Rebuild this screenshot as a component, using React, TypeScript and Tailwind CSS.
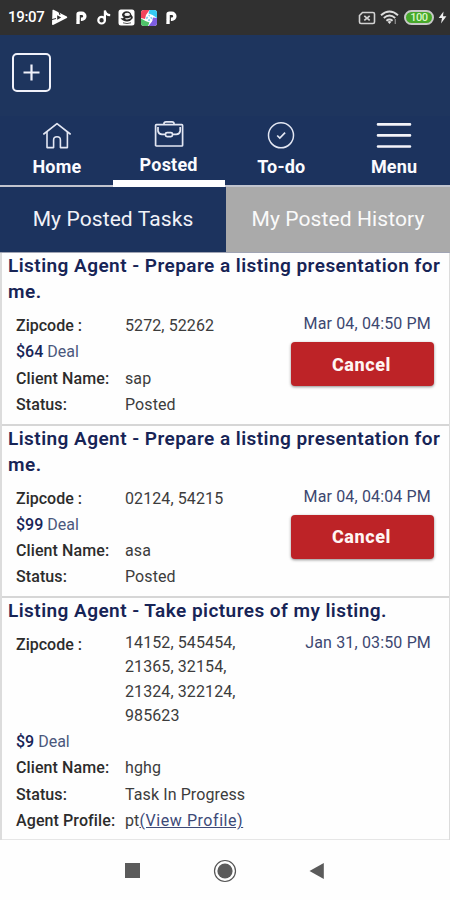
import React from "react";

function PlayGlyph() {
  return (
    <svg width="17" height="17" viewBox="0 0 17 17" className="shrink-0">
      <path d="M1.5 1 Q1.8 .4 2.6 .8 L15.8 7.6 Q16.8 8.3 15.8 9 L2.6 15.8 Q1 16.2 1 15 Z" fill="#fff" />
      <path d="M6.2 6.2 L10.2 8.4 L6.2 10.8 Z" fill="#303030" />
      <path d="M0 10.8 L5 9.5 M8 3.2 L9 6" stroke="#303030" strokeWidth="1" />
    </svg>
  );
}

function PGlyph() {
  return (
    <svg width="13" height="14" viewBox="0 0 12 14" className="shrink-0">
      <path d="M2.6 8.4 V3.2 Q2.6 2.2 4 2.2 H6.3 A3 3 0 0 1 6.3 8.3 H5.4" fill="none" stroke="#fff" strokeWidth="3.4" />
      <path d="M1 8 H4.2 V13 H.8 Z" fill="#fff" />
    </svg>
  );
}

function NoteGlyph() {
  return (
    <svg width="14" height="15" viewBox="0 0 14 15" className="shrink-0">
      <circle cx="4.6" cy="10.2" r="3.3" fill="none" stroke="#fff" strokeWidth="2.2" />
      <path d="M7.9 10.5 V.5 C8.4 3.5 10 5 13.2 5.2" fill="none" stroke="#fff" strokeWidth="2.2" />
    </svg>
  );
}

function FaceGlyph() {
  return (
    <svg width="17" height="17" viewBox="0 0 17 17" className="shrink-0">
      <rect x=".5" y=".5" width="16" height="16" rx="2.5" fill="#fff" />
      <path d="M4 5.5 Q5 2.5 8.5 2.3 Q12.8 2.5 13.2 5.5 Q15.2 7.5 14.5 9.5 Q12.5 12.6 9 12.5 Q4.5 12.3 2.5 9 Q6 10 5.5 8 Q4 7.5 4 5.5 Z" fill="#2a2a2a" />
      <ellipse cx="9.2" cy="5.4" rx="2.8" ry="1.6" fill="#f2f2f2" />
      <path d="M7.5 9.4 Q10 10.6 12.8 8.6" stroke="#eee" strokeWidth="1.1" fill="none" />
      <path d="M5 13.8 Q9 15.3 13 13.8" stroke="#444" strokeWidth=".9" fill="none" />
    </svg>
  );
}

function ColorGlyph() {
  return (
    <svg width="16" height="16" viewBox="0 0 16 16" className="shrink-0">
      <clipPath id="tile"><rect width="16" height="16" rx="3" /></clipPath>
      <g clipPath="url(#tile)">
        <rect width="16" height="16" fill="#fff" />
        <path d="M0 0 H8.5 L5 5 L4 9 L0 8 Z" fill="#f2435c" />
        <path d="M8.5 0 H16 V8 L11.5 5 L7.5 3.5 Z" fill="#35c9f1" />
        <path d="M0 8.5 L4.5 11 L8.5 12.5 L7 16 H0 Z" fill="#4fc46a" />
        <path d="M16 8 V16 H7.5 L11 11.5 L12 7.5 Z" fill="#7d5de0" />
        <path d="M8 4.5 L11.5 8 L8 11.5 L4.5 8 Z" fill="#7fcdf0" />
        <path d="M6 5 L11 11 M10.5 5.5 L5.5 10.5" stroke="#fff" strokeWidth="1.2" />
      </g>
    </svg>
  );
}

function StatusBar() {
  return (
    <div className="flex h-[35px] items-center bg-[#303030] pl-[8px] pr-[3px] text-white">
      <span className="w-[43px] whitespace-nowrap text-[15px] font-medium leading-none tracking-[-0.3px]">19:07</span>
      <PlayGlyph />
      <span className="ml-[7px] flex"><PGlyph /></span>
      <span className="ml-[9px] flex"><NoteGlyph /></span>
      <span className="ml-[7px] flex"><FaceGlyph /></span>
      <span className="ml-[6px] flex"><ColorGlyph /></span>
      <span className="ml-[8px] flex"><PGlyph /></span>
      <div className="ml-auto flex items-center">
        <svg width="18" height="14" viewBox="0 0 18 14">
          <path d="M4.5 1.5 H15 Q16.5 1.5 16.5 3 V11 Q16.5 12.5 15 12.5 H3 Q1.5 12.5 1.5 11 V4.5 Z" fill="none" stroke="#d2d2d2" strokeWidth="1.6" />
          <path d="M6.3 4.8 L11.7 9.4 M11.7 4.8 L6.3 9.4" stroke="#d2d2d2" strokeWidth="1.7" />
        </svg>
        <svg width="19" height="15" viewBox="0 0 19 15" className="ml-[4px]">
          <path d="M1 5.2 Q9.5 -2.2 18 5.2 M3.8 8 Q9.5 3.2 15.2 8 M6.4 10.7 Q9.5 8.3 12.6 10.7" fill="none" stroke="#ddd" strokeWidth="1.9" />
          <path d="M7.5 11.8 Q9.5 10.4 11.5 11.8 L9.5 14 Z" fill="#ddd" />
          <path d="M15.3 9 V14" stroke="#888" strokeWidth="1.3" />
        </svg>
        <div className="ml-[5px] flex h-[15px] w-[30px] items-center justify-center rounded-full border-2 border-[#c8c8c8] bg-[#46a82b] text-[11px] font-medium leading-none tracking-[-0.5px] text-[#d9f7c6]">
          100
        </div>
        <svg width="9" height="13" viewBox="0 0 9 13" className="ml-[4px]">
          <path d="M5.5 .5 L.7 7 H4 L3 12.5 L8.4 5.2 H5 Z" fill="#eee" />
        </svg>
      </div>
    </div>
  );
}

function HomeIcon() {
  return (
    <svg width="30" height="28" viewBox="0 0 30 28" fill="none" stroke="#e3e7f3" strokeWidth="1.6" strokeLinejoin="round" strokeLinecap="round">
      <path d="M1.8 12 L15 1.6 L28.2 12" />
      <path d="M5 10.2 V25.6 H11.6 V18 Q11.6 14.8 15 14.8 Q18.4 14.8 18.4 18 V25.6 H25.4 V10.2" />
    </svg>
  );
}

function BriefcaseIcon() {
  return (
    <svg width="30" height="28" viewBox="0 0 30 28" fill="none" stroke="#e3e7f3" strokeWidth="1.7" strokeLinejoin="round">
      <rect x="1.6" y="4.6" width="27" height="21.4" rx=".8" />
      <path d="M10 4.6 V3.6 Q10 1.8 12 1.8 H18 Q20 1.8 20 3.6 V4.6" />
      <path d="M4 7 V11 Q4.6 14.2 8 14.4 H11.5 M26.2 7 V11 Q25.6 14.2 22.2 14.4 H18.5" />
      <rect x="11.5" y="12.6" width="7" height="4" rx="1.6" />
    </svg>
  );
}

function TodoIcon() {
  return (
    <svg width="28" height="28" viewBox="0 0 28 28" fill="none" stroke="#e3e7f3">
      <circle cx="14" cy="13.3" r="12.5" strokeWidth="1.5" />
      <path d="M10.2 13.5 L12.8 16.1 L18.1 10.7" strokeWidth="1.7" />
    </svg>
  );
}

function MenuIcon() {
  return (
    <svg width="36" height="28" viewBox="0 0 36 28" stroke="#f3f4fa" strokeWidth="2.6" strokeLinecap="round">
      <path d="M2 2.4 H34 M2 13.4 H34 M2 24.5 H34" />
    </svg>
  );
}

function NavItem({ icon, label, active = false }: { icon: React.ReactNode; label: string; active?: boolean }) {
  return (
    <div className={active ? "flex flex-1 flex-col items-center border-b-[7px] border-white pt-[4px]" : "flex flex-1 flex-col items-center border-b-2 border-[#c1c4ce] pl-px pt-[6px]"}>
      <div className="flex h-[28px]">{icon}</div>
      <span className="mt-[6px] text-[18px] font-bold leading-[22px] tracking-[0.2px] text-[#fbfbff]">{label}</span>
    </div>
  );
}

interface Task {
  title: string;
  zip: string;
  price: string;
  client: string;
  status: string;
  date: string;
  agent?: string;
  cancel?: boolean;
}

const tasks: Task[] = [
  { title: "Listing Agent - Prepare a listing presentation for me.", zip: "5272, 52262", price: "$64", client: "sap", status: "Posted", date: "Mar 04, 04:50 PM", cancel: true },
  { title: "Listing Agent - Prepare a listing presentation for me.", zip: "02124, 54215", price: "$99", client: "asa", status: "Posted", date: "Mar 04, 04:04 PM", cancel: true },
  { title: "Listing Agent - Take pictures of my listing.", zip: "14152, 545454, 21365, 32154, 21324, 322124, 985623", price: "$9", client: "hghg", status: "Task In Progress", date: "Jan 31, 03:50 PM", agent: "pt" },
];

function Row({ label, children }: { label: string; children: React.ReactNode }) {
  return (
    <div className="flex leading-[26.3px]">
      <span className="w-[109px] shrink-0 whitespace-nowrap font-medium tracking-[0.1px] text-[#2c2c2c]">{label}</span>
      <span className="whitespace-nowrap tracking-[0.1px] text-[#3c3c3c]">{children}</span>
    </div>
  );
}

function TaskCard({ task }: { task: Task }) {
  return (
    <article className={task.cancel ? "h-[172.5px] border-b-2 border-[#d6d6d6]" : "h-[242px] border-b border-[#e6e6e6]"}>
      <h2 className="pl-[6px] text-[19px] font-semibold leading-[26px] tracking-[0.45px] text-[#172456]">{task.title}</h2>
      <div className="mt-[8px] flex justify-between pl-[14px] pr-[15px] text-[16px]">
        <div>
          <div className="flex">
            <span className="w-[109px] font-medium leading-[26.3px] text-[#2c2c2c]">Zipcode :</span>
            <span className={task.cancel ? "leading-[26.3px] tracking-[0.1px] text-[#3c3c3c]" : "-mt-px w-[125px] pb-[1px] leading-[24.3px] tracking-[0.1px] text-[#3c3c3c]"}>{task.zip}</span>
          </div>
          <div className="leading-[26.3px] text-[#4b587c]">
            <span className="font-medium text-[#172456]">{task.price}</span> Deal
          </div>
          <Row label="Client Name:">{task.client}</Row>
          <Row label="Status:">{task.status}</Row>
          {task.agent && (
            <Row label="Agent Profile:">
              {task.agent}
              <span className="tracking-[0.55px] text-[#3d4a78] underline">(View Profile)</span>
            </Row>
          )}
        </div>
        <div className="-mt-[2px] flex flex-col items-end">
          <span className="mr-[3px] whitespace-nowrap leading-[26px] tracking-[0.15px] text-[#3c4770]">{task.date}</span>
          {task.cancel && (
            <button className="mt-[5px] h-[44px] w-[143px] rounded-[4px] bg-[#bd2327] pr-[2px] text-[18px] font-extrabold tracking-[0.6px] text-[#fff5f3] shadow-[0_1px_3px_rgba(0,0,0,0.45)]">Cancel</button>
          )}
        </div>
      </div>
    </article>
  );
}

export default function App() {
  return (
    <div className="h-[900px] w-[450px] overflow-hidden bg-[#fefefe] font-['Roboto','Liberation_Sans',sans-serif]">
      <StatusBar />
      <header className="h-[81px] bg-[#1e355e] pl-[12px] pt-[18px]">
        <div className="flex h-[39px] w-[39px] items-center justify-center rounded-[5px] border-2 border-[#f0f1fa]">
          <svg width="17" height="17" viewBox="0 0 17 17" stroke="#f0f1fa" strokeWidth="2.2">
            <path d="M8.5 .5 V16.5 M.5 8.5 H16.5" />
          </svg>
        </div>
      </header>
      <nav className="flex h-[71px] bg-[#1c335e]">
        <NavItem icon={<HomeIcon />} label="Home" />
        <NavItem icon={<BriefcaseIcon />} label="Posted" active />
        <NavItem icon={<TodoIcon />} label="To-do" />
        <NavItem icon={<MenuIcon />} label="Menu" />
      </nav>
      <div className="flex h-[66px] border-b border-b-[#a0a4b4] text-[21px] tracking-[0.1px]">
        <div className="flex w-[226px] items-center justify-center bg-[#1c335e] pt-px text-[#f1f2f8]">My Posted Tasks</div>
        <div className="flex flex-1 items-center justify-center bg-[#aaaaaa] pt-px text-[#fafafa]">My Posted History</div>
      </div>
      <main className="h-[587px] border-l-2 border-r border-[#dcdcdc]">
        {tasks.map((task) => (
          <TaskCard key={task.date} task={task} />
        ))}
      </main>
      <footer className="flex h-[60px] items-center pl-[125px] pt-px">
        <div className="h-[15px] w-[15px] bg-[#5b5b5b]" />
        <svg width="24" height="24" viewBox="0 0 24 24" className="ml-[73px]">
          <circle cx="12" cy="12" r="10.5" fill="none" stroke="#555" strokeWidth="1.2" />
          <circle cx="12" cy="12" r="7.6" fill="#5b5b5b" />
        </svg>
        <svg width="16" height="18" viewBox="0 0 16 18" className="ml-[72px]">
          <path d="M.5 9 L14.8 1 V17 Z" fill="#5b5b5b" />
        </svg>
      </footer>
    </div>
  );
}
